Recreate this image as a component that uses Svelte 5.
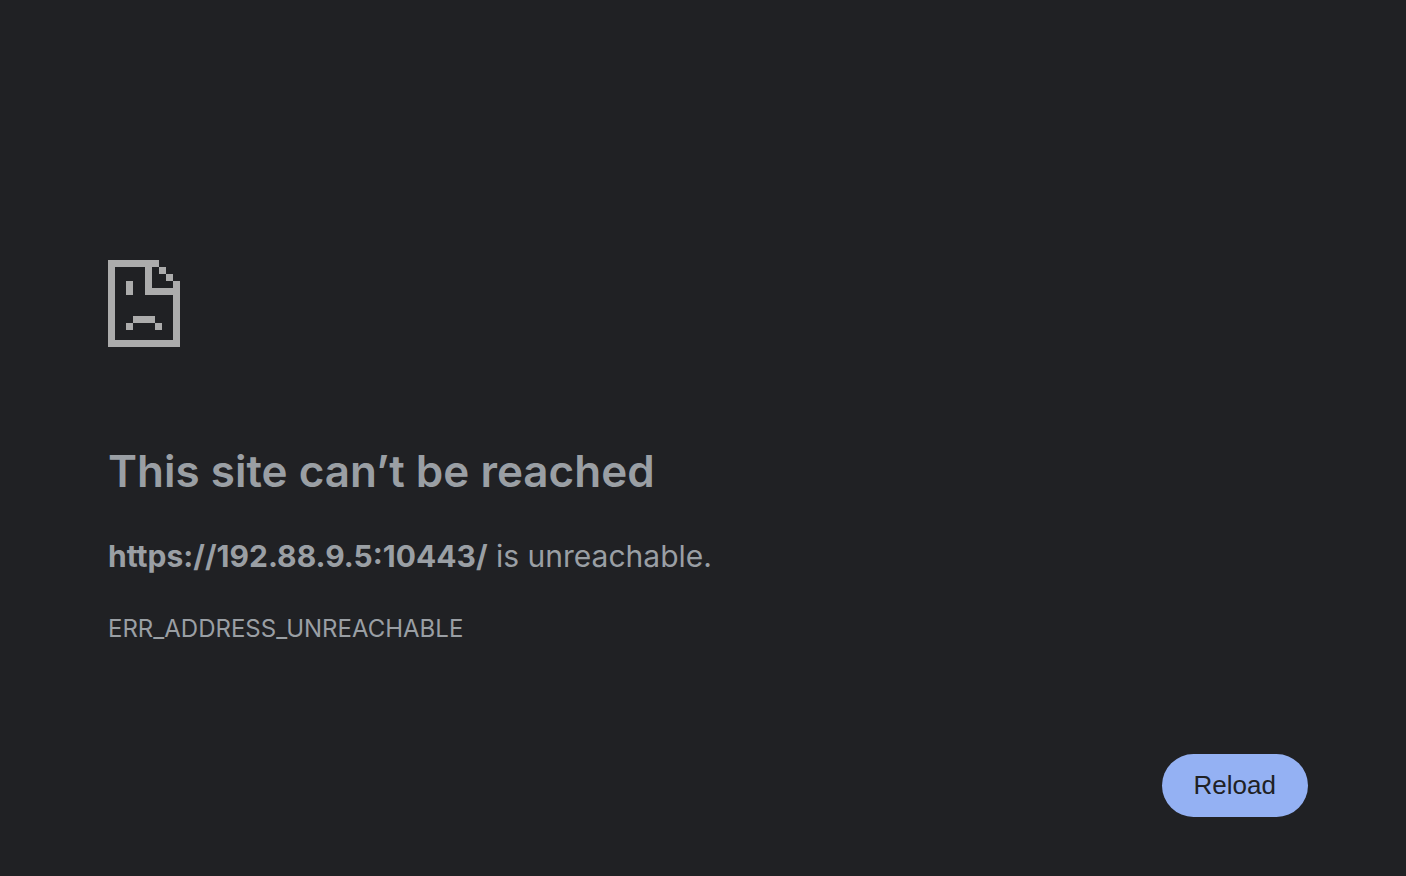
<script>
	const address = 'https://192.88.9.5:10443/';

	function reload() {
		location.reload();
	}
</script>

<svelte:head>
	<title>{address}</title>
</svelte:head>

<main class="interstitial">
	<svg class="icon" viewBox="0 0 72 87" shape-rendering="crispEdges" aria-hidden="true">
		<path d="M0 0h51v7H7v73h58V35H37V7h7v21h21v-7h7v66H0z" />
		<path d="M51 7h7v7h-7zM58 14h7v7h-7z" />
		<path d="M18 21h7v14h-7zM25 56h22v7H25zM18 63h7v7h-7zM47 63h7v7h-7z" />
	</svg>
	<h1>This site can’t be reached</h1>
	<p class="summary"><strong>{address}</strong> is unreachable.</p>
	<p class="code">ERR_ADDRESS_UNREACHABLE</p>
	<div class="buttons">
		<button type="button" onclick={reload}>Reload</button>
	</div>
</main>

<style>
	:global(body) {
		margin: 0;
		background: #202124;
	}
	.interstitial {
		box-sizing: border-box;
		min-height: 100vh;
		padding: 260px 98px 40px 108px;
		color: #9a9fa4;
		font-family: Inter, 'Liberation Sans', sans-serif;
	}
	.icon {
		display: block;
		width: 72px;
		height: 87px;
		fill: #acacac;
	}
	h1 {
		margin: 96px 0 0;
		font-size: 44px;
		font-weight: 600;
		line-height: 56px;
	}
	.summary {
		margin: 33px 0 0;
		font-size: 30px;
		line-height: 48px;
	}
	.code {
		margin: 33px 0 0;
		font-size: 24px;
		line-height: 32px;
	}
	.buttons {
		display: flex;
		justify-content: flex-end;
		margin-top: 109px;
	}
	button {
		padding: 0 32px;
		border: 0;
		border-radius: 32px;
		background: #94b1f3;
		color: #202124;
		font-family: 'Liberation Sans', Arial, sans-serif;
		font-size: 26px;
		line-height: 63px;
		cursor: pointer;
	}
</style>
